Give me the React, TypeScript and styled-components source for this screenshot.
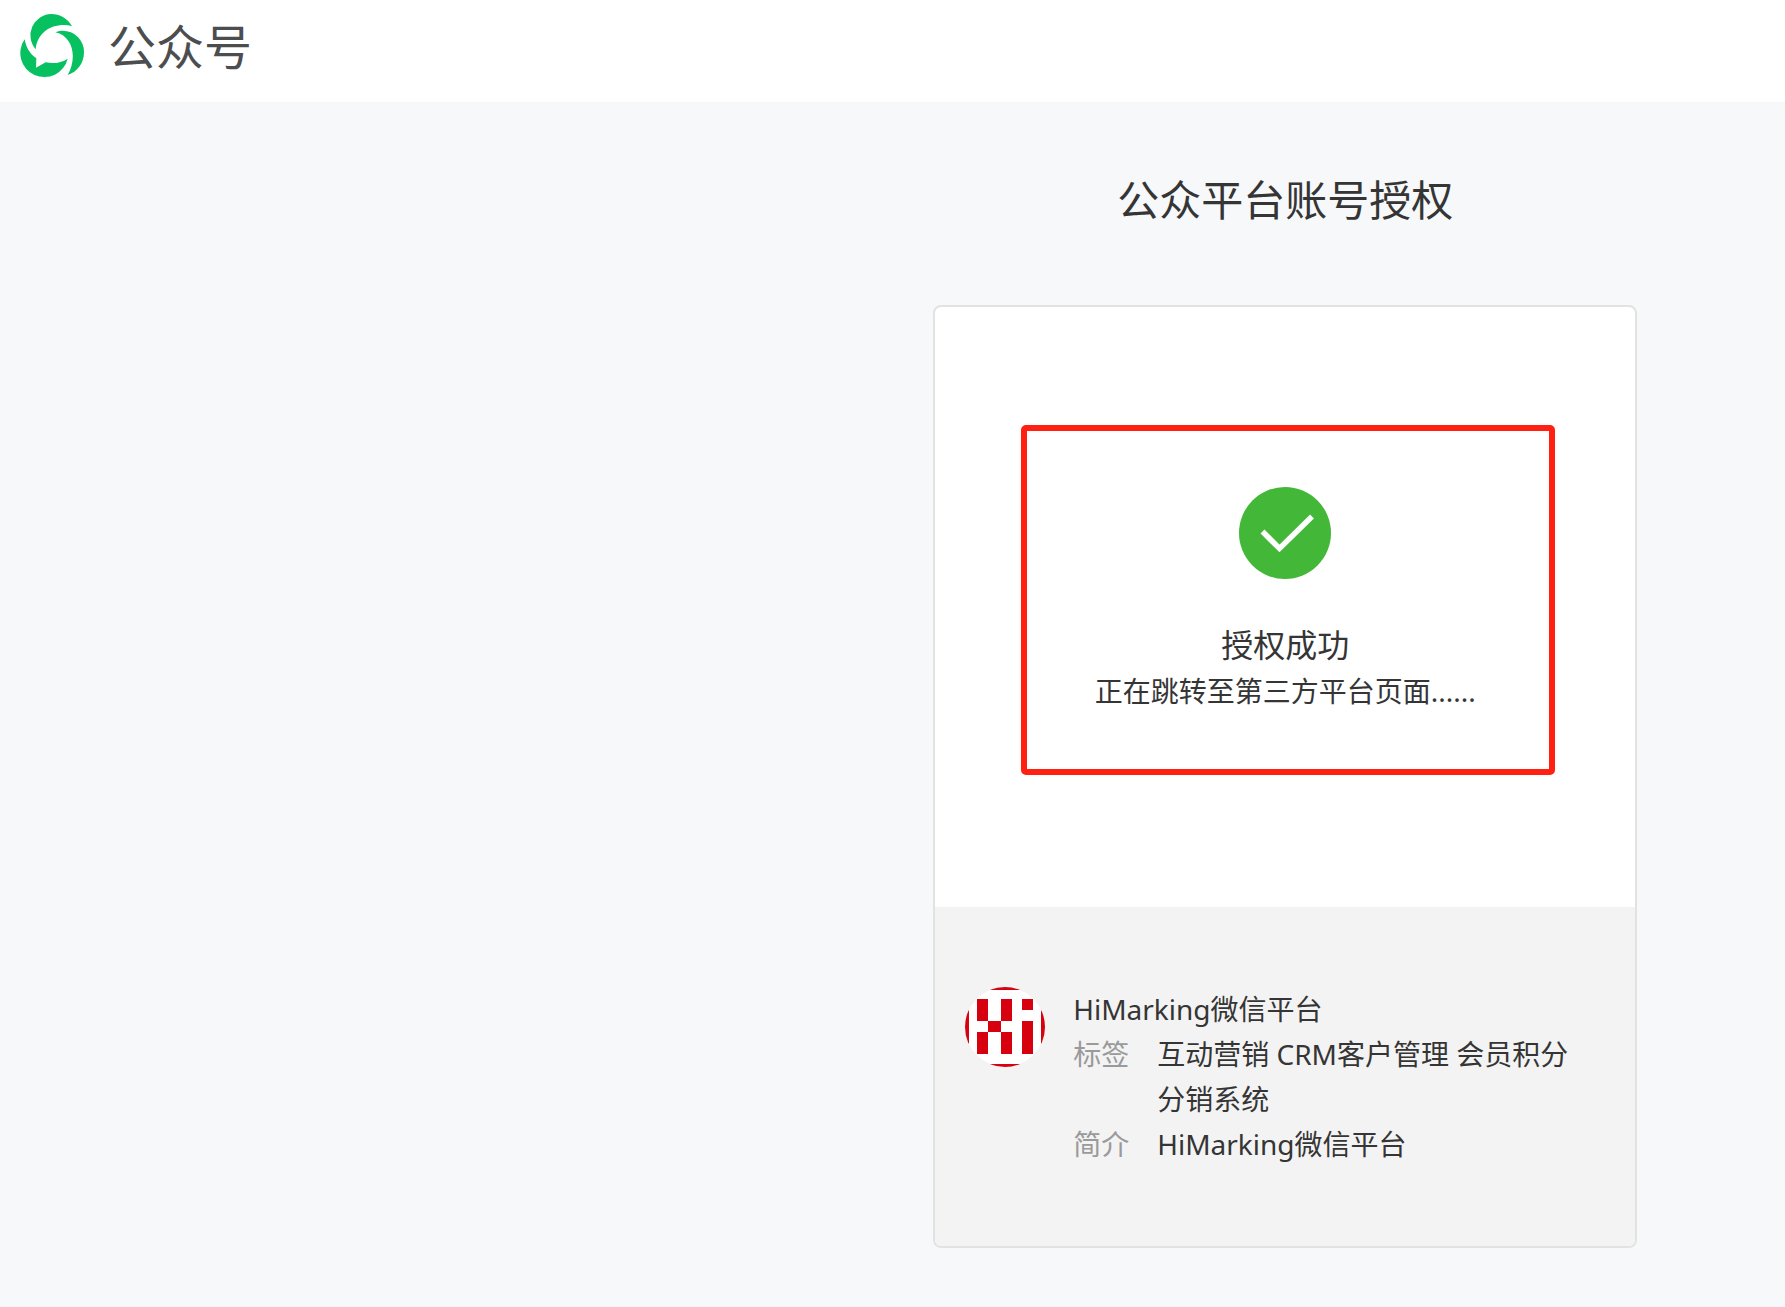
import React from "react";
import styled, { createGlobalStyle } from "styled-components";

const GlobalStyle = createGlobalStyle`
  * {
    box-sizing: border-box;
  }
  body {
    margin: 0;
    background: #f7f8fa;
    color: #353535;
    font-family: "Noto Sans", "Noto Sans CJK SC", sans-serif;
    font-size: 28px;
    line-height: 45px;
  }
  h1, h2, p, dl, dd {
    margin: 0;
    font-weight: 400;
  }
`;

const Header = styled.header`
  display: flex;
  align-items: center;
  gap: 24px;
  height: 102px;
  padding: 0 20px 10px;
  background: #fff;
`;

const BrandMark = styled.svg`
  width: 64px;
  height: 64px;
`;

const BrandName = styled.span`
  color: #4c4d4f;
  font-size: 48px;
`;

const Main = styled.main`
  display: flex;
  flex-direction: column;
  align-items: center;
  padding: 67px 0 40px 44%;
`;

const Title = styled.h1`
  margin-bottom: 74px;
  font-size: 42px;
  line-height: 62px;
`;

const Card = styled.section`
  width: 704px;
  max-width: 100%;
  overflow: hidden;
  border: 2px solid #e2e2e2;
  border-radius: 8px;
  background: #fff;
`;

const Result = styled.div`
  position: relative;
  display: flex;
  flex-direction: column;
  align-items: center;
  min-height: 600px;
  padding-top: 180px;
`;

const Highlight = styled.div`
  position: absolute;
  inset: 118px 80px 132px 86px;
  border: 6px solid #ff2012;
  border-radius: 5px;
  pointer-events: none;
`;

const CheckMark = styled.svg`
  width: 92px;
  height: 92px;
  margin-bottom: 43px;
`;

const ResultTitle = styled.h2`
  margin-bottom: 2px;
  font-size: 32px;
`;

const Account = styled.div`
  display: flex;
  gap: 28px;
  padding: 80px 48px 79px 30px;
  background: #f3f3f3;
`;

const Avatar = styled.svg`
  flex: none;
  width: 80px;
  height: 80px;
`;

const Details = styled.div`
  flex: 1;
  min-width: 0;
`;

const Facts = styled.dl`
  display: grid;
  grid-template-columns: 84px 1fr;
`;

const Term = styled.dt`
  color: #9a9a9a;
`;

const facts = [
  { term: "标签", value: "互动营销 CRM客户管理 会员积分 分销系统" },
  { term: "简介", value: "HiMarking微信平台" },
];

export default function App() {
  return (
    <>
      <GlobalStyle />
      <Header>
        <BrandMark viewBox="60 42 192 192" fill="#07c160" aria-hidden="true">
          <path d="M107 148A64 64 0 0 1 153 42C180 42 203 56 216 78C164 66 112 92 107 148Z" />
          <path d="M166 97C172 94 180 92 188 92A64 64 0 0 1 252 157C252 190 232 216 203 225C230 180 224 110 166 97Z" />
          <path d="M74 118C78 142 90 163 109 175L108 203L137 187C160 192 184 189 203 176A72 72 0 1 1 74 118Z" />
        </BrandMark>
        <BrandName>公众号</BrandName>
      </Header>
      <Main>
        <Title>公众平台账号授权</Title>
        <Card>
          <Result>
            <CheckMark viewBox="0 0 92 92" aria-hidden="true">
              <circle cx="46" cy="46" r="46" fill="#42b738" />
              <path d="M23.5 44.5L40.5 61.5L73 29.5" fill="none" stroke="#fff" strokeWidth="5.5" />
            </CheckMark>
            <ResultTitle>授权成功</ResultTitle>
            <p>正在跳转至第三方平台页面......</p>
            <Highlight />
          </Result>
          <Account>
            <Avatar viewBox="0 0 80 80" aria-hidden="true">
              <clipPath id="avatar">
                <circle cx="40" cy="40" r="40" />
              </clipPath>
              <g clipPath="url(#avatar)">
                <circle cx="40" cy="40" r="40" fill="#fff" />
                <path
                  d="M20 0h40v3h-40zM20 77h40v3h-40zM0 20h4v40h-4zM76 20h4v40h-4zM12 12h11v22h-11zM36 12h11v22h-11zM12 45h11v22h-11zM36 45h11v22h-11zM23 34h13v11h-13zM57 12h11v11h-11zM57 34h11v33h-11z"
                  fill="#d7000f"
                />
              </g>
            </Avatar>
            <Details>
              <p>HiMarking微信平台</p>
              <Facts>
                {facts.map(({ term, value }) => (
                  <React.Fragment key={term}>
                    <Term>{term}</Term>
                    <dd>{value}</dd>
                  </React.Fragment>
                ))}
              </Facts>
            </Details>
          </Account>
        </Card>
      </Main>
    </>
  );
}
